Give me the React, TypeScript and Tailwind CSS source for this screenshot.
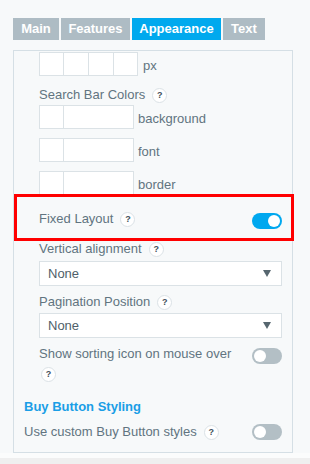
import React from "react";

const Help = () => (
  <span className="inline-flex h-[15px] w-[15px] items-center justify-center rounded-full border border-[#dbe2e6] bg-white align-middle text-[9px] font-bold leading-none text-[#3f4f5a]">
    ?
  </span>
);

const Toggle = ({ on }: { on?: boolean }) => (
  <div
    className={`flex h-[16px] w-[30px] shrink-0 items-center rounded-full px-[2px] ${
      on ? "justify-end bg-[#00a8ef]" : "justify-start bg-[#b3bfc5]"
    }`}
  >
    <div className="h-[12px] w-[12px] rounded-full bg-white" />
  </div>
);

const ColorRow = ({ label, mt }: { label: string; mt: string }) => (
  <div className={`flex h-[24px] items-center ${mt}`}>
    <div className="flex h-[24px] w-[95px] border border-[#dbe2e6] bg-white">
      <div className="w-[24px] border-r border-[#dbe2e6]" />
    </div>
    <span className="ml-[4px] pt-[3px]">{label}</span>
  </div>
);

const Select = ({ mt }: { mt: string }) => (
  <div className={`flex h-[25px] items-center justify-between border border-[#dbe2e6] bg-white pl-[8px] pr-[10px] text-[#4f5f6a] ${mt}`}>
    <span>None</span>
    <svg width="8" height="7" viewBox="0 0 8 7">
      <path d="M0 0H8L4 7Z" fill="#56666f" />
    </svg>
  </div>
);

export default function App() {
  return (
    <div
      className="flex h-[464px] w-[310px] flex-col bg-[#f7f9fa] text-[13px] leading-[16px] text-[#617480]"
      style={{ fontFamily: '"Liberation Sans", Arial, sans-serif' }}
    >
      <div className="ml-[13px] mt-[18px] flex h-[22px] gap-[2px] text-[13px] font-bold text-white">
        <div className="flex w-[46px] items-center justify-center bg-[#aebcc4]">Main</div>
        <div className="flex w-[69px] items-center justify-center bg-[#aebcc4]">Features</div>
        <div className="flex w-[89px] items-center justify-center bg-[#00a9ee]">Appearance</div>
        <div className="flex w-[42px] items-center justify-center bg-[#aebcc4]">Text</div>
      </div>

      <div className="ml-[13px] mt-[10px] flex w-[280px] flex-col border border-[#d5dfe5] bg-[#f7f9fa]">
        <div className="pl-[25px] pr-[10px]">
          <div className="mt-[1px] flex h-[24px] items-center">
            <div className="flex h-[24px] bg-white">
              <div className="w-[25px] border border-[#dbe2e6]" />
              <div className="w-[25px] border-y border-r border-[#dbe2e6]" />
              <div className="w-[25px] border-y border-r border-[#dbe2e6]" />
              <div className="w-[24px] border-y border-r border-[#dbe2e6]" />
            </div>
            <span className="ml-[5px] pt-[3px]">px</span>
          </div>
          <div className="mt-[11px] flex h-[16px] items-center gap-[7px]">
            <span>Search Bar Colors</span>
            <Help />
          </div>
          <ColorRow label="background" mt="mt-[2px]" />
          <ColorRow label="font" mt="mt-[9px]" />
          <ColorRow label="border" mt="mt-[9px]" />
        </div>

        <div className="-mt-[1px] flex h-[47px] w-[280px] items-center border-[3px] border-[#ff0000] pl-[22px] pr-[9px] pt-[3px]">
          <div className="flex flex-1 items-center gap-[7px]">
            <span>Fixed Layout</span>
            <Help />
          </div>
          <div className="mt-[3px]">
            <Toggle on />
          </div>
        </div>

        <div className="pl-[25px] pr-[10px]">
          <div className="flex h-[16px] items-center gap-[7px]">
            <span>Vertical alignment</span>
            <Help />
          </div>
          <Select mt="mt-[4px]" />
          <div className="mt-[8px] flex h-[16px] items-center gap-[7px]">
            <span>Pagination Position</span>
            <Help />
          </div>
          <Select mt="mt-[3px]" />
          <div className="mt-[6px] flex items-start">
            <div className="flex-1 pr-[12px] leading-[20px]">
              Show sorting icon on mouse over{" "}
              <span className="ml-[2px]">
                <Help />
              </span>
            </div>
            <div className="mt-[4px]">
              <Toggle />
            </div>
          </div>
        </div>

        <div className="pl-[10px] pr-[10px]">
          <div className="mt-[15px] h-[16px] font-bold text-[#1a9ee6]">Buy Button Styling</div>
          <div className="mb-[12px] mt-[9px] flex h-[16px] items-center">
            <div className="flex flex-1 items-center gap-[7px]">
              <span>Use custom Buy Button styles</span>
              <Help />
            </div>
            <Toggle />
          </div>
        </div>
      </div>
      <div className="h-[5px] bg-[#fbfcfc]" />
      <div className="flex-1 bg-[#efefef]" />
    </div>
  );
}
